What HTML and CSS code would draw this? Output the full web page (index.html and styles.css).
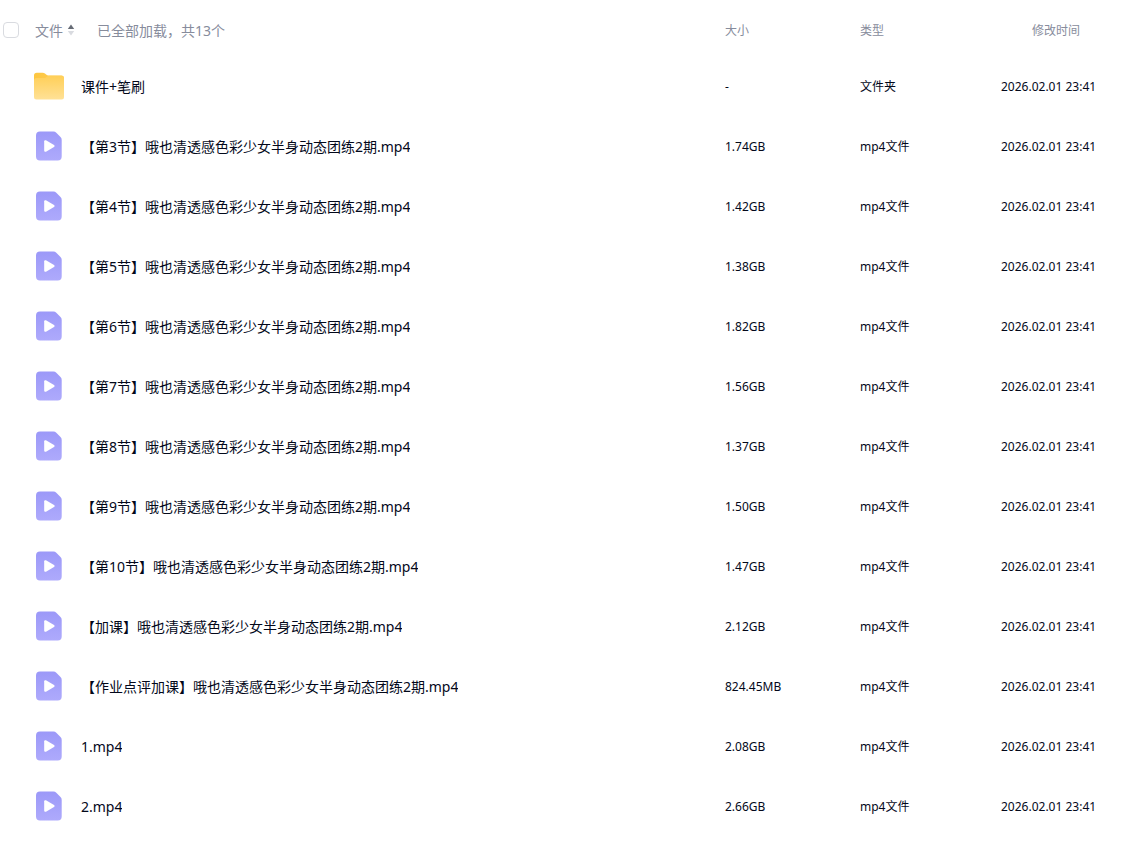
FILE: index.html
```html
<!DOCTYPE html>
<html lang="zh-CN">
<head>
    <meta charset="UTF-8">
    <meta name="viewport" content="width=device-width, initial-scale=1.0">
    <title>文件列表</title>
    <link rel="stylesheet" href="styles.css">
</head>
<body>
    <!-- Shared icons -->
    <svg class="icon-defs" width="0" height="0" aria-hidden="true">
        <defs>
            <linearGradient id="folderBack" x1="0" y1="0" x2="1" y2="0">
                <stop offset="0" stop-color="#fdc640"/>
                <stop offset="1" stop-color="#ffcf58"/>
            </linearGradient>
            <linearGradient id="folderFront" x1="0" y1="0" x2="0" y2="1">
                <stop offset="0" stop-color="#ffcf58"/>
                <stop offset="1" stop-color="#ffe196"/>
            </linearGradient>
            <linearGradient id="videoFill" x1="0" y1="0" x2="0" y2="1">
                <stop offset="0" stop-color="#9c99f8"/>
                <stop offset="1" stop-color="#aeaafc"/>
            </linearGradient>
            <symbol id="icon-folder" viewBox="0 0 30 30">
                <path d="M0 4.500A2.800 2.800 0 0 1 2.800 1.700h5.700c1.100 0 2 .4 2.800 1.100l.8.700c.8.700 1.700 1 2.700 1h12.700A2.500 2.500 0 0 1 30 7v8H0z" fill="url(#folderBack)"/>
                <path d="M0 9.500A2.500 2.500 0 0 1 2.500 7h7c1.300 0 2.200-.3 3.200-1s2-1.200 3.300-1.200h11.500A2.500 2.500 0 0 1 30 7.300v18.700a2.500 2.500 0 0 1-2.500 2.500h-25A2.500 2.500 0 0 1 0 26z" fill="url(#folderFront)"/>
            </symbol>
            <symbol id="icon-video" viewBox="0 0 30 30">
                <path d="M6 .5h13.500a4 4 0 0 1 2.800 1.200l4.200 4.300A4 4 0 0 1 27.700 9v16.500a4 4 0 0 1-4 4H6a4 4 0 0 1-4-4v-21a4 4 0 0 1 4-4z" fill="url(#videoFill)"/>
                <path d="M10.200 10.300v9.400a1.200 1.200 0 0 0 1.800 1l8-4.700a1.200 1.200 0 0 0 0-2L12 9.300a1.200 1.200 0 0 0-1.800 1z" fill="#fff"/>
            </symbol>
        </defs>
    </svg>

    <table class="file-table">
        <colgroup>
            <col class="col-check">
            <col class="col-name">
            <col class="col-size">
            <col class="col-type">
            <col class="col-time">
        </colgroup>
        <thead>
            <tr>
                <th><input type="checkbox" class="check-all" aria-label="全选"></th>
                <th>
                    <div class="head-name">
                        <button type="button" class="sort-button">
                            <span class="label">文件</span>
                            <svg class="sort-icon" width="8" height="12" viewBox="0 0 8 12" aria-hidden="true">
                                <path d="M4 0.500L7.200 5H.8z" fill="#666b75"/>
                                <path d="M4 11.500L7.200 7H.8z" fill="#d9dbe0"/>
                            </svg>
                        </button>
                        <span class="label">已全部加载，共13个</span>
                    </div>
                </th>
                <th><div class="label">大小</div></th>
                <th><div class="label">类型</div></th>
                <th class="head-time"><div class="label">修改时间</div></th>
            </tr>
        </thead>
        <tbody id="fileRows"></tbody>
    </table>

    <script src="files.js"></script>
</body>
</html>
```
FILE: styles.css
```css
body {
    margin: 0;
    background-color: #ffffff;
    color: #03081a;
    font-family: "Noto Sans", "Noto Sans CJK SC", sans-serif;
    font-size: 12px;
    line-height: 20px;
}
.icon-defs {
    position: absolute;
}
.file-table {
    width: 100%;
    margin-top: 4px;
    border-collapse: collapse;
    table-layout: fixed;
}
.col-check {
    width: 34px;
}
.col-size {
    width: 135px;
}
.col-type {
    width: 141px;
}
.col-time {
    width: 124px;
}
th,
td {
    padding: 0;
    text-align: left;
    vertical-align: middle;
    white-space: nowrap;
}
th {
    height: 52px;
    color: #878c9c;
    font-weight: normal;
}
td {
    height: 60px;
}
.label {
    padding-top: 2px;
}
.check-all {
    appearance: none;
    display: block;
    width: 16px;
    height: 16px;
    margin: 0 0 0 3px;
    border: 1px solid #d9dbe0;
    border-radius: 4px;
    background-color: #ffffff;
    cursor: pointer;
}
.check-all:checked {
    border-color: #06a7ff;
    background-color: #06a7ff;
}
.head-name {
    display: flex;
    align-items: center;
    gap: 22px;
    padding-left: 1px;
    font-size: 14px;
}
.sort-button {
    display: flex;
    align-items: center;
    gap: 4px;
    padding: 0;
    border: none;
    background: none;
    color: inherit;
    font: inherit;
    cursor: pointer;
}
.head-time {
    padding-left: 31px;
}
.file-link {
    display: flex;
    align-items: center;
    gap: 17px;
    color: inherit;
    font-size: 14px;
    text-decoration: none;
}
.file-link:hover {
    color: #06a7ff;
}
.file-icon {
    flex: none;
    width: 30px;
    height: 30px;
}
.file-name {
    overflow: hidden;
    text-overflow: ellipsis;
}
```
FILE: files.js
```js
const files = [
    { name: '课件+笔刷', size: '-', folder: true },
    { name: '【第3节】哦也清透感色彩少女半身动态团练2期.mp4', size: '1.74GB' },
    { name: '【第4节】哦也清透感色彩少女半身动态团练2期.mp4', size: '1.42GB' },
    { name: '【第5节】哦也清透感色彩少女半身动态团练2期.mp4', size: '1.38GB' },
    { name: '【第6节】哦也清透感色彩少女半身动态团练2期.mp4', size: '1.82GB' },
    { name: '【第7节】哦也清透感色彩少女半身动态团练2期.mp4', size: '1.56GB' },
    { name: '【第8节】哦也清透感色彩少女半身动态团练2期.mp4', size: '1.37GB' },
    { name: '【第9节】哦也清透感色彩少女半身动态团练2期.mp4', size: '1.50GB' },
    { name: '【第10节】哦也清透感色彩少女半身动态团练2期.mp4', size: '1.47GB' },
    { name: '【加课】哦也清透感色彩少女半身动态团练2期.mp4', size: '2.12GB' },
    { name: '【作业点评加课】哦也清透感色彩少女半身动态团练2期.mp4', size: '824.45MB' },
    { name: '1.mp4', size: '2.08GB' },
    { name: '2.mp4', size: '2.66GB' }
];

// Build one table row per file
document.getElementById('fileRows').innerHTML = files.map(file => `
    <tr>
        <td></td>
        <td>
            <a class="file-link" href="#">
                <svg class="file-icon" aria-hidden="true"><use href="#${file.folder ? 'icon-folder' : 'icon-video'}"/></svg>
                <span class="file-name label">${file.name}</span>
            </a>
        </td>
        <td><div class="label">${file.size}</div></td>
        <td><div class="label">${file.folder ? '文件夹' : 'mp4文件'}</div></td>
        <td><div class="label">2026.02.01 23:41</div></td>
    </tr>
`).join('');
```
